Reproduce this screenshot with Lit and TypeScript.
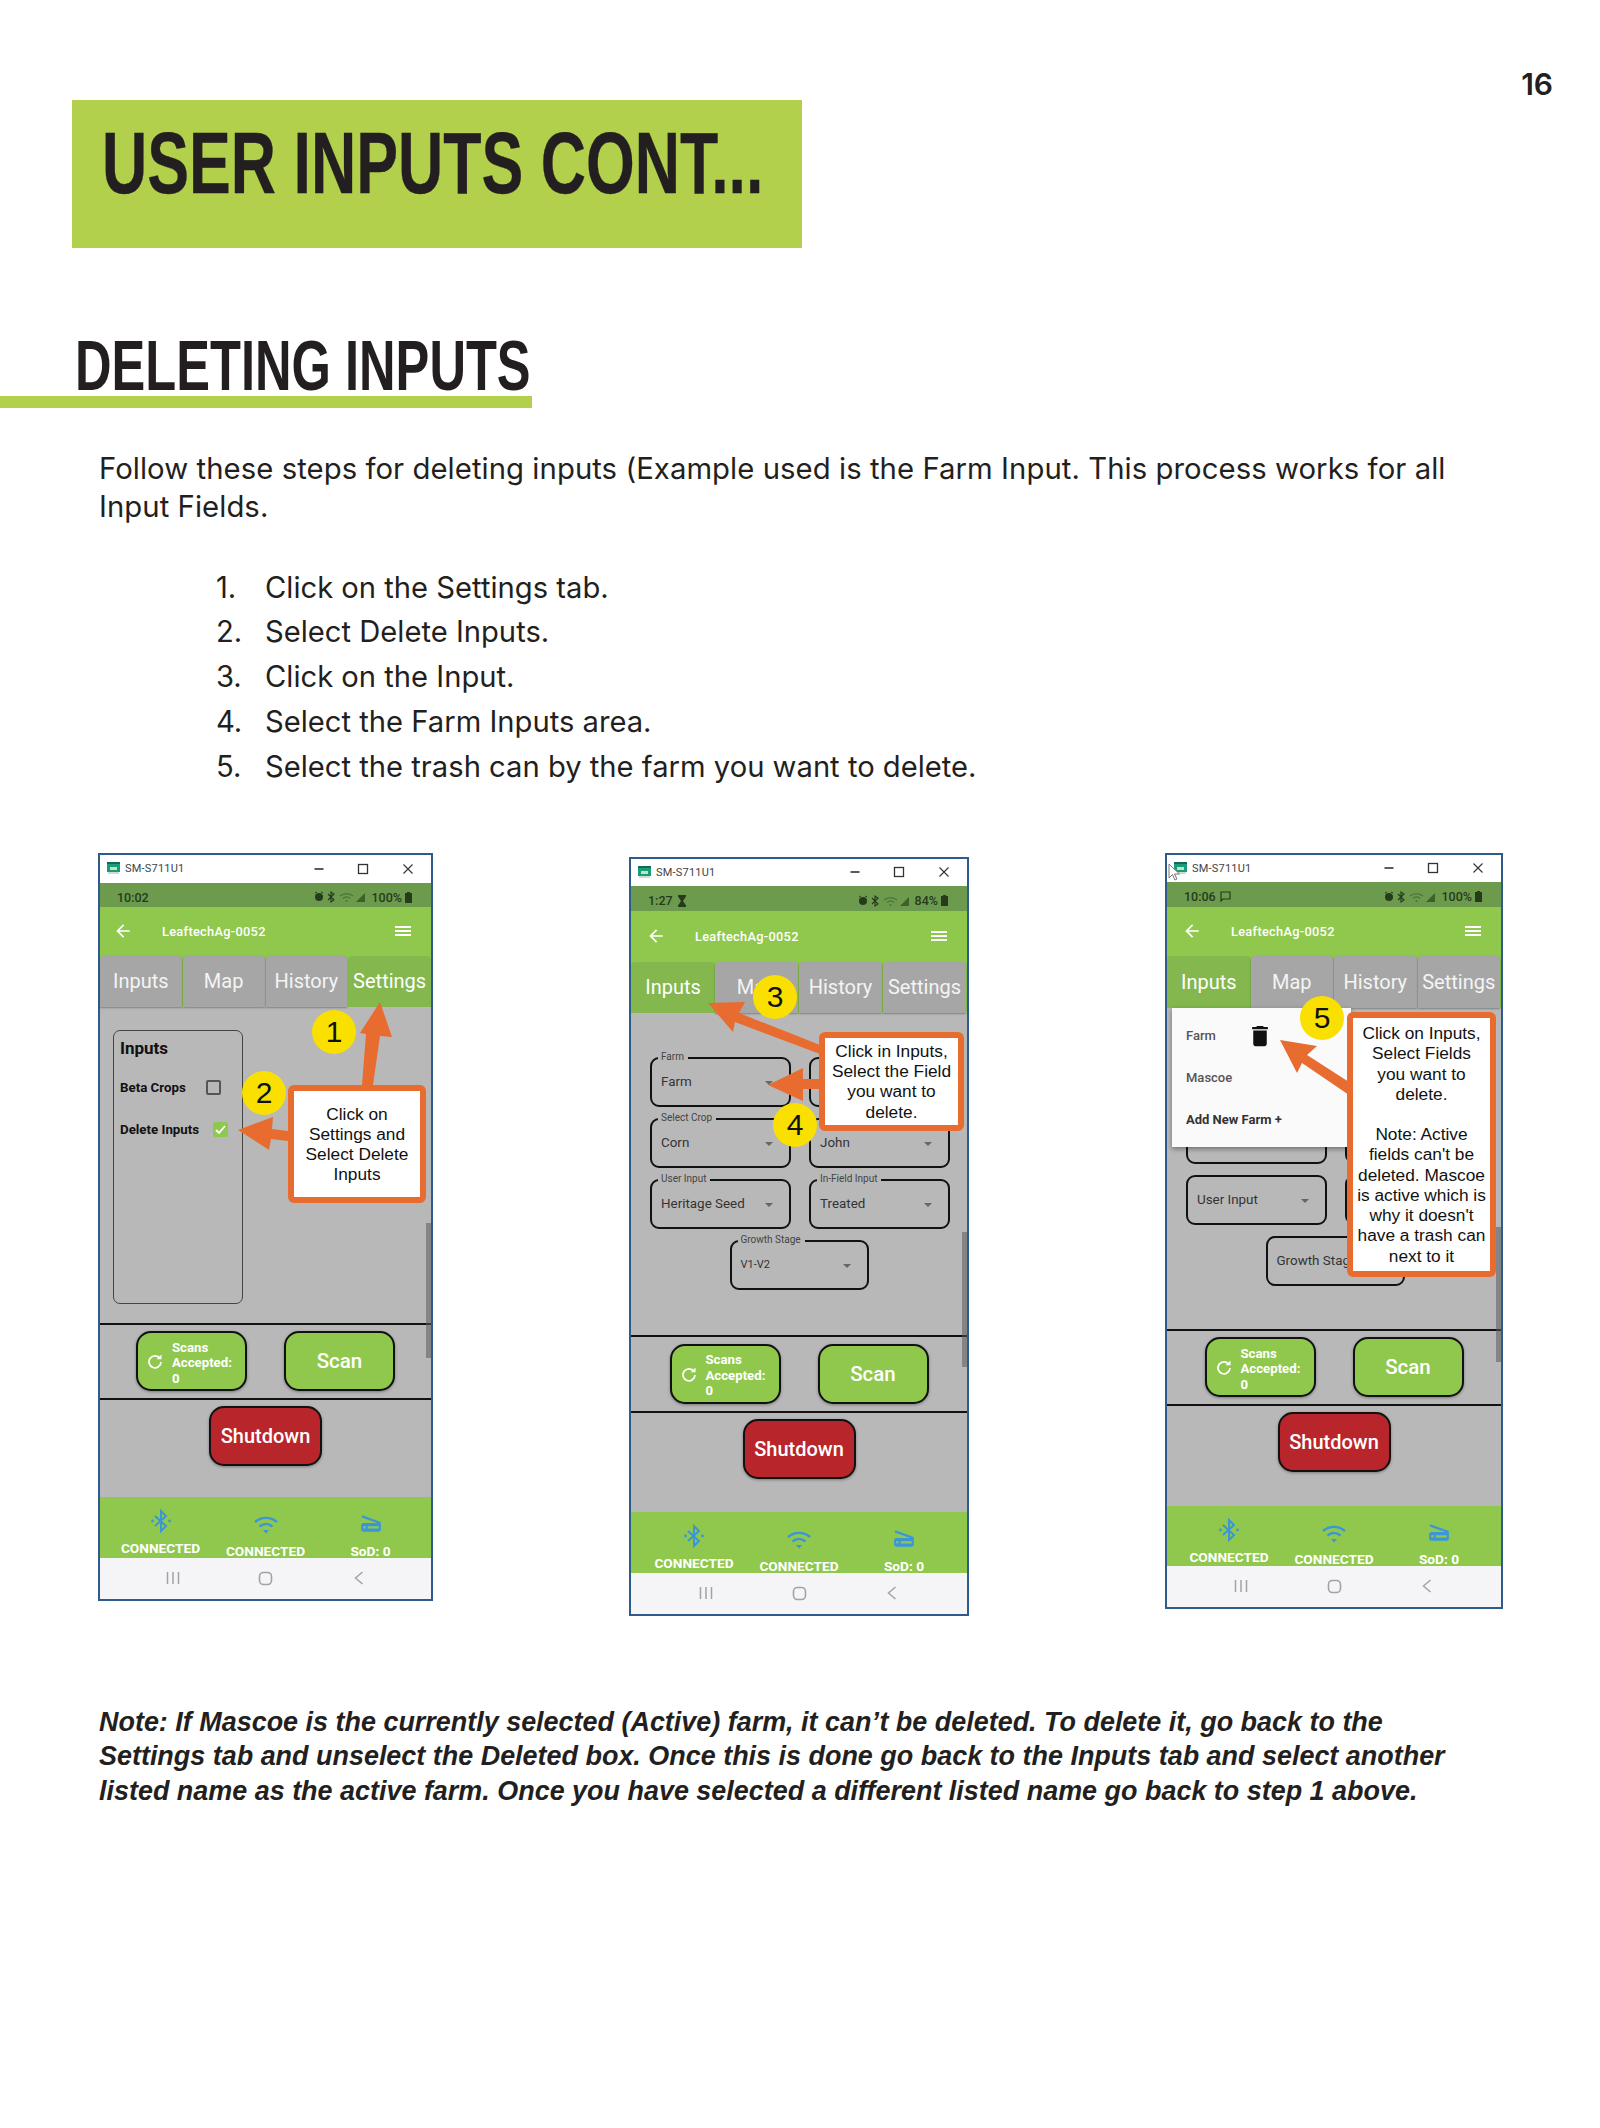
import { LitElement, html, css, svg } from "lit";
import { customElement } from "lit/decorators.js";

const poly = (p: string) => svg`<polygon points=${p} fill="#e86c2f"></polygon>`;

@customElement("app-root")
export class AppRoot extends LitElement {
  static styles = css`
    :host { display: block; width: 1600px; height: 2128px; background: #fff; color: #231f20; font-family: Inter, "Liberation Sans", sans-serif; overflow: hidden; }
    .num-row { height: 100px; box-sizing: border-box; padding: 66px 47px 0 0; display: flex; justify-content: flex-end; }
    .num { font: 600 30px/36px Inter, "Liberation Sans", sans-serif; }
    .banner { margin-left: 72px; width: 730px; height: 148px; box-sizing: border-box; background: #b2d04b; padding: 13px 0 0 30px; }
    .t1 { display: inline-block; transform: scaleX(0.712); transform-origin: left center; font: 700 88px/100px "Liberation Sans", sans-serif; white-space: nowrap; -webkit-text-stroke: .3px #231f20; }
    .h2 { margin-top: 84px; width: 532px; height: 76px; box-sizing: border-box; border-bottom: 12px solid #b2d04b; padding-left: 75px; }
    .t2 { display: inline-block; transform: scaleX(0.713); transform-origin: left center; font: 700 71px/68px "Liberation Sans", sans-serif; white-space: nowrap; }
    .intro { margin: 42px 0 0 99px; width: 1380px; font-size: 29.3px; line-height: 38px; letter-spacing: .055px; }
    .steps { margin: 39.5px 0 0 216px; padding: 0; list-style: none; font-size: 29.2px; line-height: 44.8px; }
    .steps li { display: flex; }
    .steps b { width: 49px; font-weight: 400; }
    .shots { display: flex; align-items: flex-start; gap: 196px; margin-top: 63.5px; padding-left: 98px; }
    .note { margin: 89px 0 0 99px; width: 1360px; font: italic 700 26.95px/34.5px "Liberation Sans", sans-serif; }

    .phone { position: relative; box-sizing: border-box; border: 2px solid #2f5b8c; display: flex; flex-direction: column; background: #b8b8b8; font-family: Roboto, sans-serif; flex: none; }
    .p1 { width: 335px; height: 748px; --title: 28px; --status: 24px; --head: 49px; --tabs: 51px; --mid: 77px; --low: 97px; --foot: 61px; --hl: 13px; }
    .p2 { width: 340px; height: 759px; margin-top: 4px; --title: 27px; --status: 25px; --head: 51px; --tabs: 51px; --mid: 78px; --low: 99px; --foot: 61px; --hl: 15px; }
    .p3 { width: 338px; height: 756px; --title: 27px; --status: 25px; --head: 49px; --tabs: 52px; --mid: 77px; --low: 100px; --foot: 60px; --hl: 15px; }

    .title { height: var(--title); background: #fff; display: flex; align-items: center; padding: 0 13px 0 7px; flex: none; color: #444; font-size: 11px; letter-spacing: .2px; }
    .title span { margin-left: 5px; }
    .title svg:last-child { margin-left: auto; }
    .status { height: var(--status); box-sizing: border-box; padding: 5px 19px 0 17px; background: #6c9b4e; display: flex; align-items: center; flex: none; color: #263a1c; font-size: 12.5px; font-weight: 500; gap: 4px; }
    .status .r { margin-left: auto; display: flex; align-items: center; gap: 3px; }
    .head { height: var(--head); background: #90c84d; display: flex; align-items: center; padding: 0 20px 0 var(--hl); flex: none; color: #fff; font-size: 12.8px; font-weight: 500; letter-spacing: .3px; }
    .head .name { margin-left: 29px; }
    .burger { margin-left: auto; width: 16px; height: 10px; border-top: 2px solid #fff; border-bottom: 2px solid #fff; position: relative; box-sizing: border-box; }
    .burger::after { content: ""; position: absolute; left: 0; right: 0; top: 2px; height: 2px; background: #fff; }
    .tabs { height: var(--tabs); display: grid; grid-template-columns: repeat(4, 1fr); flex: none; background: #90c84d; }
    .tab { background: #a6a6a6; color: #f4f4f4; font-size: 20px; display: flex; align-items: center; justify-content: center; border-radius: 4px 4px 0 0; margin-right: 1px; box-shadow: 0 1px 2px rgba(0,0,0,.3); white-space: nowrap; overflow: hidden; }
    .tab.on { background: #84b84e; color: #fff; margin-right: 0; box-shadow: none; }
    .body { flex: 1; position: relative; min-height: 0; }
    .panel { margin: 23px 0 0 13px; width: 130px; height: 274px; box-sizing: border-box; border: 1.5px solid #444; border-radius: 7px; padding: 5px 0 0 6px; color: #111; }
    .panel h3 { margin: 0; font: 700 17px/24px Roboto, sans-serif; }
    .chk { display: flex; align-items: center; font: 700 13.3px/16px Roboto, sans-serif; margin-top: 20px; height: 16px; }
    .chk + .chk { margin-top: 26px; }
    .box { box-sizing: border-box; width: 15px; height: 15px; border: 2px solid #555; border-radius: 2px; margin-left: 20px; }
    .box.yes { background: #8ec84f; border: 0; margin-left: 14px; display: flex; align-items: center; justify-content: center; }
    .grid { display: grid; grid-template-columns: 141px 141px; column-gap: 18px; row-gap: 11px; padding: 44px 0 0 19px; }
    .p3 .grid { padding-top: 45px; }
    .field { position: relative; height: 50px; box-sizing: border-box; border: 2px solid #111; border-radius: 9px; display: flex; align-items: center; padding-left: 9px; font-size: 13.4px; color: #333; }
    .field.wide { grid-column: 1 / -1; justify-self: center; width: 139px; position: relative; left: -1px; }
    .field label { position: absolute; left: 6px; top: -8px; background: #b8b8b8; padding: 0 4px 0 3px; font-size: 10px; line-height: 12px; color: #444; white-space: nowrap; }
    .field i { position: absolute; right: 16px; top: 22px; width: 0; height: 0; border: 4px solid transparent; border-top: 4px solid #666; border-bottom: 0; }
    .small { font-size: 11px; }
    .mid { height: var(--mid); box-sizing: border-box; flex: none; border-top: 2px solid #111; border-bottom: 2px solid #111; display: flex; align-items: center; justify-content: center; gap: 37px; }
    .btn { box-sizing: border-box; width: 111px; height: 60px; border: 2.5px solid #111; border-radius: 15px; background: #90c84d; color: #fff; display: flex; align-items: center; justify-content: center; font-size: 20.5px; font-weight: 500; box-shadow: 0 1px 3px rgba(0,0,0,.35); }
    .scans { justify-content: flex-start; padding-left: 9px; gap: 9px; font: 700 13.2px/15.5px Roboto, sans-serif; }
    .scans div { margin-top: 3px; }
    .low { height: var(--low); flex: none; display: flex; justify-content: center; padding-top: 6px; box-sizing: border-box; }
    .shut { background: #b8252a; width: 113px; font-size: 20px; }
    .foot { height: var(--foot); background: #90c84d; flex: none; display: grid; grid-template-columns: repeat(3, 105px); justify-content: center; overflow: hidden; color: #fff; font-size: 13.7px; font-weight: 700; text-align: center; }
    .foot div { display: flex; flex-direction: column; align-items: center; white-space: nowrap; padding-top: 18px; }
    .foot span { line-height: 14px; margin-top: 9px; }
    .foot div:first-child { padding-top: 12px; }
    .foot div:first-child span { margin-top: 8px; }
    .foot div:last-child { padding-top: 15px; }
    .foot div:last-child span { margin-top: 10px; }
    .p3 .foot div:nth-child(2) span { margin-top: 8px; }
    .p3 .foot div:last-child span { margin-top: 9px; }
    .nav { flex: none; height: 41px; background: #f5f5f8; display: grid; grid-template-columns: repeat(3, 93px); justify-content: center; align-items: center; justify-items: center; }
    .scroll { position: absolute; right: 0; width: 5px; background: rgba(90,90,90,.55); height: 135px; }
    .p1 .scroll { top: 368px; }
    .p2 .scroll { top: 373px; }
    .p3 .scroll { top: 372px; }
    .menu { position: absolute; left: 5px; top: 153px; width: 179px; height: 139px; background: #fafafa; box-shadow: 0 2px 5px rgba(0,0,0,.4); color: #555; font-size: 13px; font-weight: 500; padding: 20px 0 0 14px; box-sizing: border-box; }
    .menu div { height: 42px; line-height: 16px; }
    .menu svg { position: absolute; left: 79px; top: 16px; }
    .menu b { color: #333; font-size: 13px; }
    .ann { position: absolute; left: -2px; top: -2px; right: -2px; bottom: -2px; pointer-events: none; }
    .ann svg { position: absolute; left: 0; top: 0; width: 100%; height: 100%; }
    .dot { position: absolute; width: 44px; height: 44px; border-radius: 50%; background: #f9e000; color: #111; font: 400 30px/44px "Liberation Sans", sans-serif; text-align: center; }
    .d1 { left: 214px; top: 157px; }
    .d2 { left: 144px; top: 218px; }
    .d3 { left: 124px; top: 118px; }
    .d4 { left: 144px; top: 246px; }
    .d5 { left: 135px; top: 143px; }
    .call { position: absolute; box-sizing: border-box; background: #fff; border: 6px solid #e86c2f; border-radius: 6px; color: #111; font: 400 17.3px/20.2px "Liberation Sans", sans-serif; text-align: center; display: flex; align-items: center; justify-content: center; white-space: pre-line; }
    .c1 { left: 190px; top: 232px; width: 138px; height: 118px; }
    .c2 { left: 190px; top: 175px; width: 145px; height: 99px; }
    .c3 { left: 182px; top: 159px; width: 149px; height: 265px; }
  `;

  private titleBar() {
    return html`<div class="title">
      <svg width="13" height="13" viewBox="0 0 13 13"><rect x="0" y="0" width="13" height="10" fill="#1c9a7c"/><rect x="0" y="0" width="13" height="2" fill="#0f6b58"/><rect x="1" y="10" width="11" height="2" fill="#cfdad5"/><rect x="3" y="5" width="7" height="3" fill="#bfe9b4"/></svg>
      <span>SM-S711U1</span>
      <svg width="110" height="16" viewBox="0 0 110 16" fill="none" stroke="#333"><path d="M6.5 8h9" stroke-width="1.6"/><rect x="50.5" y="3.5" width="9" height="9" stroke-width="1.3"/><path d="M95.5 3.5l9 9M104.5 3.5l-9 9" stroke-width="1.1"/></svg>
    </div>`;
  }

  private statusBar(time: string, extra: unknown, pct: string) {
    return html`<div class="status"><span>${time}</span>${extra}
      <div class="r">
        <svg width="54" height="12" viewBox="0 0 54 12"><circle cx="5" cy="6" r="4" fill="#263a1c"/><path d="M1 2l2-1M9 2l-2-1" stroke="#263a1c" stroke-width="1"/><path d="M14 3l6 6-3 2V1l3 2-6 6" fill="none" stroke="#263a1c" stroke-width="1.1"/><path d="M26 5c4-3 9-3 13 0M29 7.500c2.500-2 5-2 7 0" fill="none" stroke="#4d6f3a" stroke-width="1.2"/><circle cx="32.500" cy="10" r="1" fill="#4d6f3a"/><path d="M42 11l9-9v9z" fill="#3f5f2d"/></svg>
        <span>${pct}</span>
        <svg width="7" height="11" viewBox="0 0 7 11"><path d="M2 0h3v1h2v10H0V1h2z" fill="#263a1c"/></svg>
      </div></div>`;
  }

  private header() {
    return html`<div class="head">
      <svg width="20" height="20" viewBox="0 0 24 24" fill="#fff"><path d="M20 11H7.830l5.590-5.590L12 4l-8 8 8 8 1.410-1.410L7.830 13H20v-2z"/></svg>
      <span class="name">LeaftechAg-0052</span><div class="burger"></div></div>`;
  }

  private tabs(on: number) {
    return html`<div class="tabs">${["Inputs", "Map", "History", "Settings"].map((t, i) => html`<div class="tab ${i === on ? "on" : ""}">${t}</div>`)}</div>`;
  }

  private bottom() {
    return html`
      <div class="mid">
        <div class="btn scans">
          <svg width="16" height="16" viewBox="0 0 16 16" fill="none" stroke="#fff" stroke-width="1.7"><path d="M13 5.500A6 6 0 1 0 14 9"/><path d="M14.500 1.500v4.800H9.700z" fill="#fff" stroke="none"/></svg>
          <div>Scans<br />Accepted:<br />0</div>
        </div>
        <div class="btn">Scan</div>
      </div>
      <div class="low"><div class="btn shut">Shutdown</div></div>
      <div class="foot">
        <div>
          <svg width="22" height="24" viewBox="0 0 22 24" fill="none" stroke="#3a96d8" stroke-width="2"><path d="M5 7l11 10-5 5V2l5 5L5 17"/><circle cx="2.500" cy="12" r="1.400" fill="#3a96d8" stroke="none"/><circle cx="19.500" cy="12" r="1.400" fill="#3a96d8" stroke="none"/></svg>
          <span>CONNECTED</span>
        </div>
        <div>
          <svg width="24" height="20" viewBox="0 0 24 20" fill="none" stroke="#3a96d8" stroke-width="2.400"><path d="M1 7c6.500-5.500 15.500-5.500 22 0M5.500 11.500c4-3.500 9-3.500 13 0"/><path d="M9 15h6l-3 3.500z" fill="#3a96d8" stroke="none"/></svg>
          <span>CONNECTED</span>
        </div>
        <div>
          <svg width="22" height="22" viewBox="2 2 20 20" fill="#3a96d8"><path d="M19.800 10.700L4.200 5l-.7 1.900L17.600 12H5c-1.100 0-2 .9-2 2v4c0 1.100.9 2 2 2h14c1.100 0 2-.9 2-2v-5.500c0-.8-.5-1.600-1.200-1.800zM7 17H5v-2h2v2zm12 0H9v-2h10v2z"/></svg>
          <span>SoD: 0</span>
        </div>
      </div>
      <div class="nav">
        <svg width="14" height="14" viewBox="0 0 14 14" stroke="#a3a3a6" stroke-width="1.500"><path d="M1.500 1v12M7 1v12M12.500 1v12"/></svg>
        <svg width="15" height="15" viewBox="0 0 15 15" fill="none" stroke="#a3a3a6" stroke-width="1.600"><rect x="1.500" y="1.500" width="12" height="12" rx="4"/></svg>
        <svg width="10" height="14" viewBox="0 0 10 14" fill="none" stroke="#a3a3a6" stroke-width="1.500"><path d="M8.500 1L1.500 7l7 6"/></svg>
      </div>
      <div class="scroll"></div>`;
  }

  private field(label: string, value: string, cls = "") {
    return html`<div class="field ${cls}">${label ? html`<label>${label}</label>` : ""}<span class=${value === "V1-V2" ? "small" : ""}>${value}</span><i></i></div>`;
  }

  render() {
    return html`
      <div class="num-row"><div class="num">16</div></div>
      <div class="banner"><span class="t1">USER INPUTS CONT...</span></div>
      <div class="h2"><span class="t2">DELETING INPUTS</span></div>
      <p class="intro">Follow these steps for deleting inputs (Example used is the Farm Input. This process works for all Input Fields.</p>
      <ol class="steps">
        <li><b>1.</b>Click on the Settings tab.</li>
        <li><b>2.</b>Select Delete Inputs.</li>
        <li><b>3.</b>Click on the Input.</li>
        <li><b>4.</b>Select the Farm Inputs area.</li>
        <li><b>5.</b>Select the trash can by the farm you want to delete.</li>
      </ol>
      <div class="shots">
        <div class="phone p1">
          ${this.titleBar()}${this.statusBar("10:02", "", "100%")}${this.header()}${this.tabs(3)}
          <div class="body">
            <div class="panel">
              <h3>Inputs</h3>
              <div class="chk">Beta Crops<div class="box"></div></div>
              <div class="chk">Delete Inputs<div class="box yes"><svg width="11" height="10" viewBox="0 0 11 10" fill="none" stroke="#fff" stroke-width="1.800"><path d="M1 5l3 3 6-7"/></svg></div></div>
            </div>
          </div>
          ${this.bottom()}
          <div class="ann">
            <svg viewBox="98 853 335 748">
              ${poly("380,1002 360,1033 366,1034 362,1085 373,1085 380,1036 392,1037")}
              ${poly("238,1130 273,1117 272,1129 288,1131 288,1141 271,1139 269,1150")}
            </svg>
            <div class="dot d1">1</div><div class="dot d2">2</div>
            <div class="call c1">Click on
Settings and
Select Delete
Inputs</div>
          </div>
        </div>
        <div class="phone p2">
          ${this.titleBar()}${this.statusBar("1:27", html`<svg width="10" height="12" viewBox="0 0 10 12" fill="#263a1c"><path d="M1 0h8v1.500L6 6l3 4.500V12H1v-1.500L4 6 1 1.500z"/></svg>`, "84%")}${this.header()}${this.tabs(0)}
          <div class="body"><div class="grid">
            ${this.field("Farm", "Farm")}${this.field("", "")}
            ${this.field("Select Crop", "Corn")}${this.field("", "John")}
            ${this.field("User Input", "Heritage Seed")}${this.field("In-Field Input", "Treated")}
            ${this.field("Growth Stage", "V1-V2", "wide")}
          </div></div>
          ${this.bottom()}
          <div class="ann">
            <svg viewBox="629 857 340 759">
              ${poly("708,1003 745,1002 739,1013 820,1045 820,1054 735,1022 733,1032")}
              ${poly("768,1085 803,1068 803,1079 820,1079 820,1089 803,1089 803,1101")}
            </svg>
            <div class="dot d3">3</div><div class="dot d4">4</div>
            <div class="call c2">Click in Inputs,
Select the Field
you want to
delete.</div>
          </div>
        </div>
        <div class="phone p3">
          ${this.titleBar()}${this.statusBar("10:06", html`<svg width="11" height="11" viewBox="0 0 11 11" fill="none" stroke="#263a1c" stroke-width="1.200"><path d="M1 1h9v7H3L1 10z"/></svg>`, "100%")}${this.header()}${this.tabs(0)}
          <div class="body"><div class="grid">
            ${this.field("", "")}${this.field("", "")}
            ${this.field("", "")}${this.field("", "")}
            ${this.field("", "User Input")}${this.field("", "")}
            ${this.field("", "Growth Stage", "wide")}
          </div></div>
          ${this.bottom()}
          <div class="menu">
            <div>Farm</div><div>Mascoe</div><div><b>Add New Farm +</b></div>
            <svg width="18" height="24" viewBox="4 2 16 20" fill="#111"><path d="M6 19c0 1.100.9 2 2 2h8c1.100 0 2-.9 2-2V7H6v12zM19 4h-3.500l-1-1h-5l-1 1H5v2h14V4z"/></svg>
          </div>
          <div class="ann">
            <svg viewBox="1165 853 338 756">
              ${poly("1280,1040 1317,1046 1307,1055 1349,1082 1349,1095 1302,1063 1297,1073")}
              <path d="M1169 864v14l3.500-3.500 2.500 5.500 2-1-2.500-5h5z" fill="#fff" stroke="#777" stroke-width="1"></path>
            </svg>
            <div class="dot d5">5</div>
            <div class="call c3">Click on Inputs,
Select Fields
you want to
delete.

Note: Active
fields can't be
deleted. Mascoe
is active which is
why it doesn't
have a trash can
next to it</div>
          </div>
        </div>
      </div>
      <p class="note">Note: If Mascoe is the currently selected (Active) farm, it can’t be deleted. To delete it, go back to the Settings tab and unselect the Deleted box. Once this is done go back to the Inputs tab and select another listed name as the active farm. Once you have selected a different listed name go back to step 1 above.</p>
    `;
  }
}
